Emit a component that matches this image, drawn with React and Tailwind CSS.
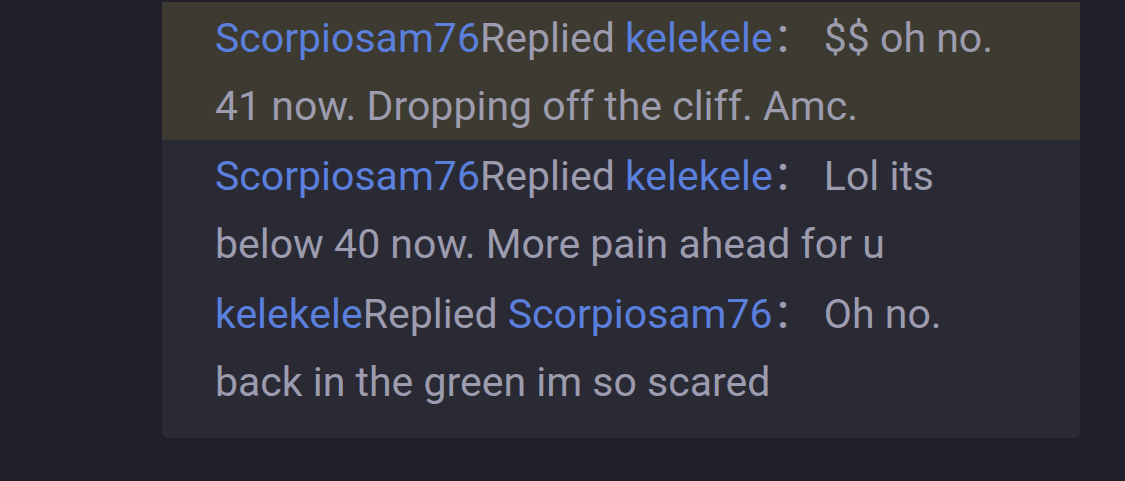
import React from "react";

const replies = [
  {
    from: "Scorpiosam76",
    to: "kelekele",
    text: "$$ oh no. 41 now. Dropping off the cliff. Amc.",
    active: true,
  },
  {
    from: "Scorpiosam76",
    to: "kelekele",
    text: "Lol its below 40 now. More pain ahead for u",
  },
  {
    from: "kelekele",
    to: "Scorpiosam76",
    text: "Oh no. back in the green im so scared",
  },
];

function ReplyRow({ from, to, text, active }) {
  return (
    <div
      className={
        "pl-[53px] pr-[65px] pt-[2px] " + (active ? "bg-[#3d3a31]" : "")
      }
    >
      <p className="text-[41px] leading-[68px] text-[#9c9cae]">
        <span className="text-[#5b7fdc]">{from}</span>
        Replied <span className="text-[#5b7fdc]">{to}</span>
        <span>：</span> {text}
      </p>
    </div>
  );
}

export default function App() {
  return (
    <div
      className="w-[1125px] h-[481px] bg-[#20202a] pt-[2px] overflow-hidden"
      style={{ fontFamily: "Roboto, 'Noto Sans CJK SC', sans-serif" }}
    >
      <div className="ml-[162px] w-[918px] bg-[#2a2a35] rounded-b-md pb-[22px]">
        {replies.map((r, i) => (
          <ReplyRow key={i} {...r} />
        ))}
      </div>
    </div>
  );
}
